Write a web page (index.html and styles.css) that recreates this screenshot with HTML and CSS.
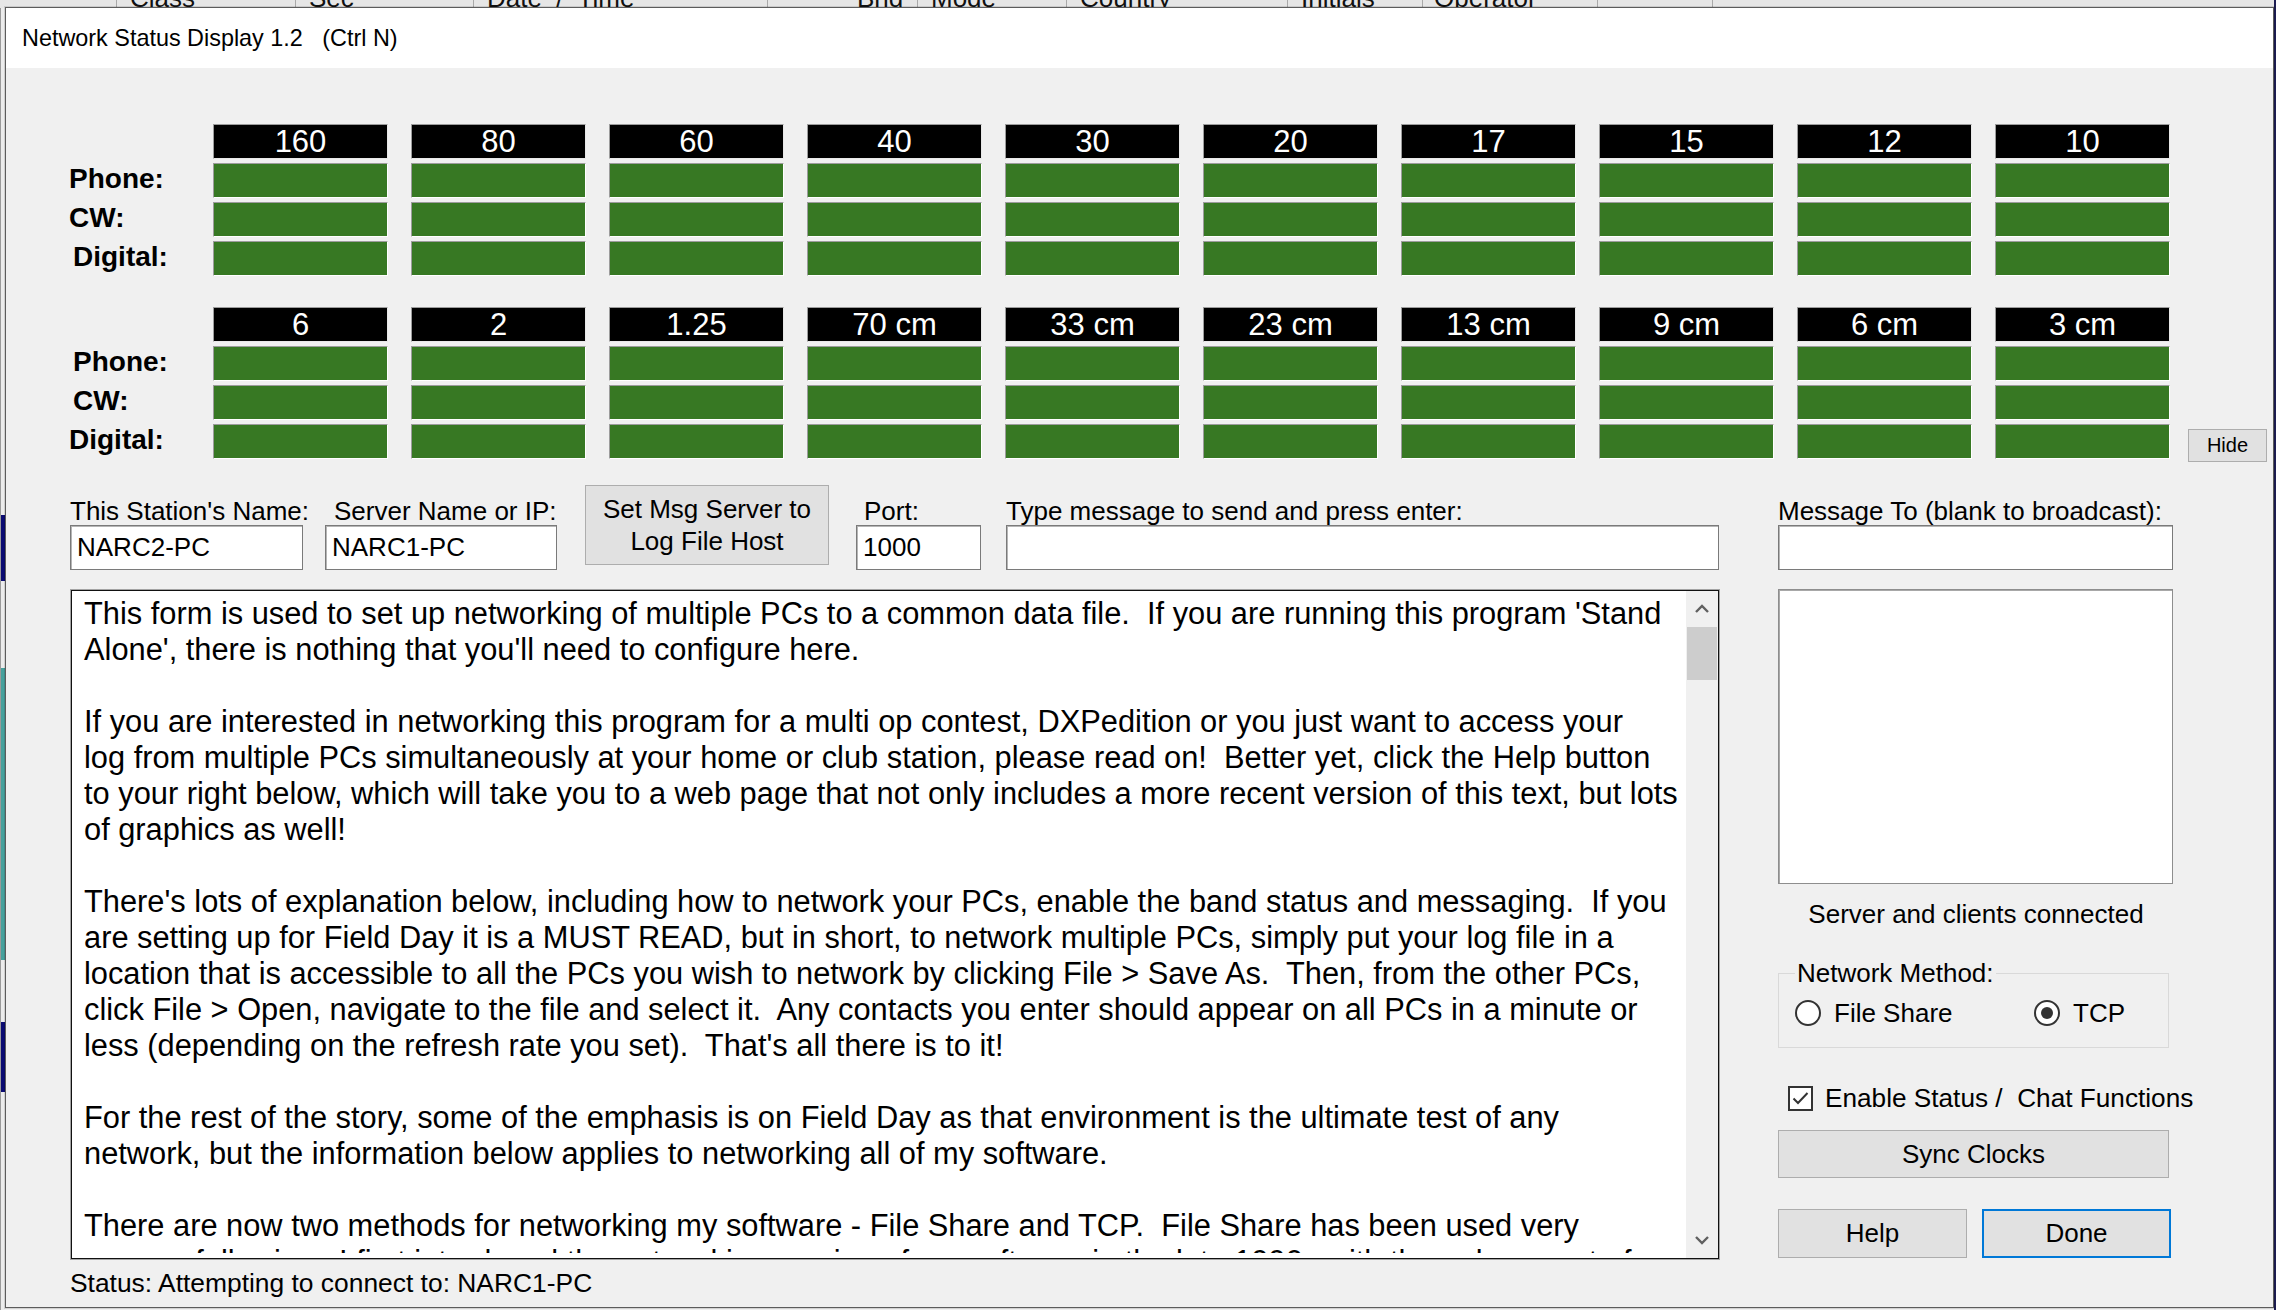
FILE: index.html
```html
<!DOCTYPE html>
<html>
<head>
<meta charset="utf-8">
<title>Network Status Display 1.2</title>
<link rel="stylesheet" href="styles.css">
</head>
<body>
<div class="bg-head">
  <div class="col" style="width:117px"></div>
  <div class="col" style="width:179px"><span>Class</span></div>
  <div class="col" style="width:178px"><span>Sec</span></div>
  <div class="col" style="width:294px"><span>Date  /  Time</span></div>
  <div class="col" style="width:150px"><span class="far">Bnd</span></div>
  <div class="col" style="width:149px"><span>Mode</span></div>
  <div class="col" style="width:221px"><span>Country</span></div>
  <div class="col" style="width:135px"><span>Initials</span></div>
  <div class="col" style="width:175px"><span class="tight">Operator</span></div>
  <div class="col" style="width:115px"></div>
  <div class="col last"></div>
</div>
<div class="bg-left">
  <div class="seg gray" style="height:507px"></div>
  <div class="seg navy" style="height:66px"></div>
  <div class="seg gray" style="height:87px"></div>
  <div class="seg teal" style="height:292px"></div>
  <div class="seg gray" style="height:62px"></div>
  <div class="seg navy" style="height:70px"></div>
  <div class="seg gray" style="height:226px"></div>
</div>
<div class="bg-right"></div>

<div class="dialog">
  <div class="titlebar">Network Status Display 1.2   (Ctrl N)</div>
  <div class="dbody">
    <div class="section">
      <div class="labels">
        <div></div>
        <div class="lbl">Phone:</div>
        <div class="lbl">CW:</div>
        <div class="lbl ind">Digital:</div>
      </div>
      <div class="bandgrid">
        <div class="bh">160</div><div class="bh">80</div><div class="bh">60</div><div class="bh">40</div><div class="bh">30</div><div class="bh">20</div><div class="bh">17</div><div class="bh">15</div><div class="bh">12</div><div class="bh">10</div>
        <div class="gb"></div><div class="gb"></div><div class="gb"></div><div class="gb"></div><div class="gb"></div><div class="gb"></div><div class="gb"></div><div class="gb"></div><div class="gb"></div><div class="gb"></div>
        <div class="gb"></div><div class="gb"></div><div class="gb"></div><div class="gb"></div><div class="gb"></div><div class="gb"></div><div class="gb"></div><div class="gb"></div><div class="gb"></div><div class="gb"></div>
        <div class="gb"></div><div class="gb"></div><div class="gb"></div><div class="gb"></div><div class="gb"></div><div class="gb"></div><div class="gb"></div><div class="gb"></div><div class="gb"></div><div class="gb"></div>
      </div>
    </div>
    <div class="section second">
      <div class="labels">
        <div></div>
        <div class="lbl ind">Phone:</div>
        <div class="lbl ind">CW:</div>
        <div class="lbl">Digital:</div>
      </div>
      <div class="bandgrid">
        <div class="bh">6</div><div class="bh">2</div><div class="bh">1.25</div><div class="bh">70 cm</div><div class="bh">33 cm</div><div class="bh">23 cm</div><div class="bh">13 cm</div><div class="bh">9 cm</div><div class="bh">6 cm</div><div class="bh">3 cm</div>
        <div class="gb"></div><div class="gb"></div><div class="gb"></div><div class="gb"></div><div class="gb"></div><div class="gb"></div><div class="gb"></div><div class="gb"></div><div class="gb"></div><div class="gb"></div>
        <div class="gb"></div><div class="gb"></div><div class="gb"></div><div class="gb"></div><div class="gb"></div><div class="gb"></div><div class="gb"></div><div class="gb"></div><div class="gb"></div><div class="gb"></div>
        <div class="gb"></div><div class="gb"></div><div class="gb"></div><div class="gb"></div><div class="gb"></div><div class="gb"></div><div class="gb"></div><div class="gb"></div><div class="gb"></div><div class="gb"></div>
      </div>
      <button class="hide">Hide</button>
    </div>

    <div class="lower">
      <div class="fields">
        <div class="field f-station"><div class="flabel">This Station's Name:</div><div class="input">NARC2-PC</div></div>
        <div class="field f-server"><div class="flabel">Server Name or IP:</div><div class="input">NARC1-PC</div></div>
        <button class="btn setmsg">Set Msg Server to<br>Log File Host</button>
        <div class="field f-port"><div class="flabel">Port:</div><div class="input">1000</div></div>
        <div class="field f-msg"><div class="flabel">Type message to send and press enter:</div><div class="input"></div></div>
      </div>
      <div class="field f-to"><div class="flabel">Message To (blank to broadcast):</div><div class="input"></div></div>

      <div class="leftcol">
        <div class="memo">
          <div class="memo-in">
            <div class="memo-text">This form is used to set up networking of multiple PCs to a common data file.  If you are running this program 'Stand
Alone', there is nothing that you'll need to configure here.

If you are interested in networking this program for a multi op contest, DXPedition or you just want to access your
log from multiple PCs simultaneously at your home or club station, please read on!  Better yet, click the Help button
to your right below, which will take you to a web page that not only includes a more recent version of this text, but lots
of graphics as well!

There's lots of explanation below, including how to network your PCs, enable the band status and messaging.  If you
are setting up for Field Day it is a MUST READ, but in short, to network multiple PCs, simply put your log file in a
location that is accessible to all the PCs you wish to network by clicking File &gt; Save As.  Then, from the other PCs,
click File &gt; Open, navigate to the file and select it.  Any contacts you enter should appear on all PCs in a minute or
less (depending on the refresh rate you set).  That's all there is to it!

For the rest of the story, some of the emphasis is on Field Day as that environment is the ultimate test of any
network, but the information below applies to networking all of my software.

There are now two methods for networking my software - File Share and TCP.  File Share has been used very
successfully since I first introduced the networking version of my software in the late 1990s with the only caveat of</div>
            <div class="sb">
              <div class="sb-btn"><svg width="16" height="10" viewBox="0 0 16 10"><polyline points="2,8 8,2 14,8" fill="none" stroke="#606060" stroke-width="2.4"/></svg></div>
              <div class="sb-track"><div class="sb-thumb"></div></div>
              <div class="sb-btn"><svg width="16" height="10" viewBox="0 0 16 10"><polyline points="2,2 8,8 14,2" fill="none" stroke="#606060" stroke-width="2.4"/></svg></div>
            </div>
          </div>
        </div>
        <div class="status">Status: Attempting to connect to: NARC1-PC</div>
      </div>

      <div class="rightcol">
        <div class="listbox"></div>
        <div class="conn">Server and clients connected</div>
        <fieldset class="grp">
          <legend>Network Method:</legend>
          <div class="radios">
            <div class="rb"><span class="circ"></span>File Share</div>
            <div class="rb"><span class="circ on"></span>TCP</div>
          </div>
        </fieldset>
        <div class="chk"><span class="cbox"><svg width="21" height="21" viewBox="0 0 21 21"><polyline points="3.5,10.5 8,15 17.5,5" fill="none" stroke="#333" stroke-width="2"/></svg></span>Enable Status /  Chat Functions</div>
        <button class="btn sync">Sync Clocks</button>
        <div class="btnrow">
          <button class="btn help">Help</button>
          <button class="btn done">Done</button>
        </div>
      </div>
    </div>
  </div>
</div>
</body>
</html>
```
FILE: styles.css
```css
* { box-sizing: border-box; }
html, body { margin: 0; padding: 0; }
body {
  width: 2276px;
  height: 1310px;
  overflow: hidden;
  position: relative;
  background: #f0f0f0;
  font-family: "Liberation Sans", Arial, sans-serif;
  color: #000;
}

.btn {
  background: #e1e1e1;
  border: 1px solid #adadad;
  font-family: "Liberation Sans", Arial, sans-serif;
  font-size: 26px;
  color: #000;
  padding: 0;
  margin: 0;
}

/* underlying application, visible around the dialog */
.bg-head {
  position: absolute;
  left: 0; top: 0;
  width: 2276px; height: 8px;
  overflow: hidden;
  background: #e6e6e6;
  display: flex;
}
.bg-head .col {
  flex: none;
  height: 8px;
  border-right: 1px solid #a9a9a9;
  overflow: hidden;
}
.bg-head .col.last { flex: 1; border-right: 0; }
.bg-head .col span {
  display: block;
  margin-top: -16px;
  line-height: 28px;
  font-size: 26px;
  padding-left: 13px;
  white-space: pre;
  color: #111;
}
.bg-head .col span.far { padding-left: 89px; }
.bg-head .col span.tight { padding-left: 11px; }

.bg-left {
  position: absolute;
  left: 0; top: 8px;
  width: 5px; height: 1302px;
  display: flex;
  flex-direction: column;
  border-left: 1px solid #9a9a9a;
}
.bg-left .seg { flex: none; }
.bg-left .gray { background: #ececec; }
.bg-left .navy { background: #0b0b72; }
.bg-left .teal { background: #47a19d; }
.bg-right {
  position: absolute;
  left: 2274px; top: 0;
  width: 2px; height: 1310px;
  background: #1d1d52;
}

/* dialog window */
.dialog {
  position: absolute;
  left: 5px; top: 7px;
  width: 2269px; height: 1301px;
  border: 1px solid #5c5c5c;
  background: #f0f0f0;
  display: flex;
  flex-direction: column;
  box-shadow: 0 0 0 1px rgba(0,0,0,0.12);
}
.titlebar {
  flex: none;
  height: 60px;
  background: #fff;
  padding-left: 16px;
  line-height: 60px;
  font-size: 23.4px;
  white-space: pre;
  color: #000;
}
.dbody {
  flex: 1;
  padding: 56px 0 0 63px;
}

/* band status grid */
.section { display: flex; }
.section.second { margin-top: 31px; }
.labels {
  flex: none;
  width: 121px;
  margin-right: 23px;
  display: grid;
  grid-template-rows: repeat(4, 35px);
  row-gap: 4px;
}
.lbl {
  font-weight: bold;
  font-size: 28px;
  line-height: 32px;
  align-self: center;
  margin-top: -3px;
  white-space: nowrap;
}
.lbl.ind { padding-left: 4px; }
.bandgrid {
  flex: none;
  display: grid;
  grid-template-columns: repeat(10, 175px);
  grid-template-rows: repeat(4, 35px);
  column-gap: 23px;
  row-gap: 4px;
}
.bh {
  background: #000;
  color: #fff;
  text-align: center;
  font-size: 31px;
  line-height: 33px;
  border: 1px solid;
  border-color: #9c9c9c #e8e8e8 #e8e8e8 #9c9c9c;
  white-space: nowrap;
}
.gb {
  background: #377823;
  border: 1px solid;
  border-color: #9c9c9c #ffffff #ffffff #9c9c9c;
}
.hide {
  flex: none;
  align-self: flex-end;
  margin: 0 0 -3px 18px;
  height: 33px;
  width: 79px;
  background: #e1e1e1;
  border: 1px solid #adadad;
  font-family: "Liberation Sans", Arial, sans-serif;
  font-size: 20px;
  padding: 0;
  color: #000;
}

/* lower section */
.lower {
  margin: 26px 0 0 1px;
  display: grid;
  grid-template-columns: 1650px 395px;
  grid-template-rows: 85px auto;
  column-gap: 58px;
  row-gap: 19px;
}
.fields {
  display: flex;
  align-items: flex-end;
}
.field { flex: none; }
.flabel {
  font-size: 26px;
  line-height: 28px;
  white-space: nowrap;
}
.input {
  height: 45px;
  background: #fff;
  border: 1px solid #7a7a7a;
  box-shadow: inset 1px 1px 0 #b5b5b5;
  font-size: 26px;
  line-height: 43px;
  padding-left: 6px;
  white-space: nowrap;
}
.f-station { width: 233px; }
.f-server { width: 232px; margin-left: 22px; }
.f-server .flabel { padding-left: 9px; }
.btn.setmsg {
  align-self: flex-start;
  width: 244px;
  height: 80px;
  margin-left: 28px;
  line-height: 32px;
}
.f-port { width: 125px; margin-left: 27px; }
.f-port .flabel { padding-left: 8px; }
.f-msg { width: 713px; margin-left: 25px; }
.f-to { align-self: end; }

.leftcol { display: flex; flex-direction: column; }
.memo {
  height: 671px;
  border: 1px solid #a3a3a3;
}
.memo-in {
  height: 100%;
  border: 1px solid #111;
  background: #fff;
  display: flex;
  overflow: hidden;
}
.memo-text {
  flex: 1;
  min-width: 0;
  overflow: hidden;
  margin-bottom: 5px;
  padding: 5px 0 0 12px;
  font-size: 30.8px;
  line-height: 36px;
  white-space: pre;
  color: #000;
}
.sb {
  flex: none;
  width: 32px;
  background: #f0f0f0;
  display: flex;
  flex-direction: column;
}
.sb-btn {
  flex: none;
  height: 36px;
  display: flex;
  align-items: center;
  justify-content: center;
}
.sb-track { flex: 1; padding: 0 1px; }
.sb-thumb { height: 53px; background: #cdcdcd; }
.status {
  margin-top: 9px;
  font-size: 26.4px;
  line-height: 28px;
  white-space: nowrap;
}

.rightcol { display: flex; flex-direction: column; }
.listbox {
  height: 295px;
  background: #fff;
  border: 1px solid #8e8e8e;
  box-shadow: inset 1px 1px 0 #a8a8a8;
}
.conn {
  margin-top: 16px;
  font-size: 26px;
  line-height: 28px;
  text-align: center;
  padding-left: 1px;
  white-space: nowrap;
}
.grp {
  margin: 31px 4px 0 0;
  border: 1px solid #d9d9d9;
  padding: 12px 0 20px 16px;
  min-width: 0;
}
.grp legend {
  font-size: 26px;
  line-height: 28px;
  padding: 0 2px;
}
.radios { display: flex; }
.rb {
  display: flex;
  align-items: center;
  font-size: 26px;
  line-height: 28px;
  white-space: nowrap;
}
.rb:first-child { width: 239px; }
.circ {
  flex: none;
  width: 26px;
  height: 26px;
  border-radius: 50%;
  border: 2px solid #333;
  background: #fff;
  margin-right: 13px;
  display: flex;
  align-items: center;
  justify-content: center;
}
.circ.on::after {
  content: "";
  width: 12px;
  height: 12px;
  border-radius: 50%;
  background: #333;
}
.chk {
  margin-top: 36px;
  padding-left: 10px;
  display: flex;
  align-items: center;
  font-size: 26.2px;
  line-height: 28px;
  white-space: pre;
}
.cbox {
  flex: none;
  width: 25px;
  height: 25px;
  border: 2px solid #333;
  background: #fff;
  margin-right: 12px;
  display: flex;
}
.btn.sync {
  margin-top: 18px;
  height: 48px;
  width: 391px;
}
.btnrow {
  margin-top: 31px;
  display: flex;
}
.help { width: 189px; height: 49px; }
.btn.done {
  width: 189px;
  height: 49px;
  margin-left: 15px;
  border: 2px solid #0078d7;
}
```
